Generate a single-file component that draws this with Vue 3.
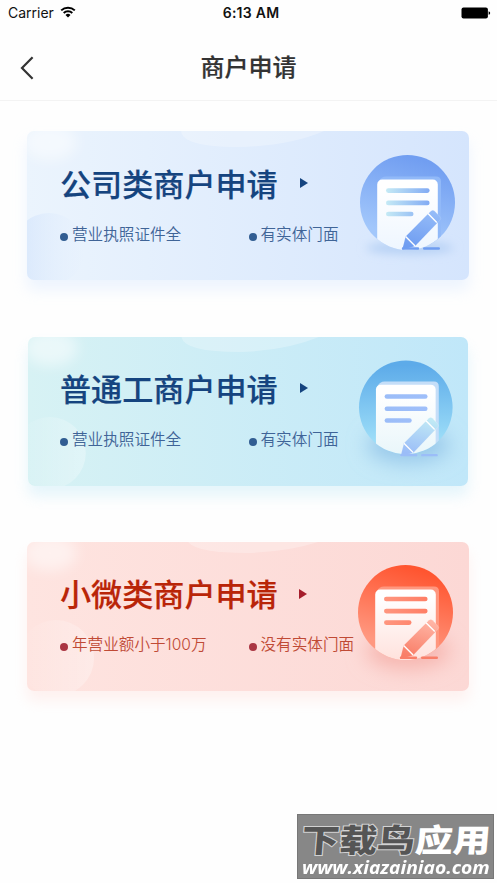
<template>
  <div class="page">
    <div class="status-bar">
      <div class="carrier">
        <span>Carrier</span>
        <svg class="wifi" viewBox="0 0 16 12">
          <path d="M1.2 4.4a9.8 9.8 0 0 1 13.6 0" />
          <path d="M3.7 7a6.2 6.2 0 0 1 8.6 0" />
          <path class="wifi-dot" d="M8 11.4 5.5 8.9a3.6 3.6 0 0 1 5 0z" />
        </svg>
      </div>
      <span class="time">6:13 AM</span>
      <svg class="battery" viewBox="0 0 30 12">
        <rect x="0.5" y="0.5" width="26.4" height="11" rx="2" />
        <path d="M27.6 4.2q1.6.4 1.6 1.8t-1.6 1.8z" />
      </svg>
    </div>

    <header class="nav-bar">
      <svg class="back" viewBox="0 0 14 24">
        <path d="M12.6 1.2 2 12l10.6 10.8" />
      </svg>
      <h1>商户申请</h1>
    </header>

    <main class="card-list">
      <section
        v-for="card in cards"
        :key="card.id"
        class="card"
        :class="card.id"
      >
        <svg class="card-decor" viewBox="0 0 442 149" preserveAspectRatio="none">
          <defs>
            <linearGradient :id="card.id + '-bubble'">
              <stop offset="0" class="bubble-from" />
              <stop offset="1" class="bubble-to" />
            </linearGradient>
            <filter :id="card.id + '-glow'" x="-50%" y="-50%" width="200%" height="200%">
              <feGaussianBlur stdDeviation="7" />
            </filter>
          </defs>
          <ellipse cx="23" cy="11" rx="27" ry="18" class="glow" :filter="url(card.id, 'glow')" />
          <path :d="card.arc" class="arc" />
          <circle
            :cx="card.bubble.x"
            :cy="card.bubble.y"
            :r="card.bubble.r"
            :fill="url(card.id, 'bubble')"
          />
        </svg>

        <div class="card-text">
          <div class="card-title">
            <h2>{{ card.title }}</h2>
            <svg class="arrow" viewBox="0 0 8 10"><path d="M0 0 8 5 0 10z" /></svg>
          </div>
          <ul class="features">
            <li v-for="item in card.features" :key="item">{{ item }}</li>
          </ul>
        </div>

        <svg class="card-icon" viewBox="0 0 95 95">
          <defs>
            <linearGradient :id="card.id + '-disc'" :x1="card.discX" y1="0" :x2="1 - card.discX" y2="1">
              <stop offset="0.05" :stop-color="card.disc[0]" />
              <stop offset="0.85" :stop-color="card.disc[1]" />
            </linearGradient>
            <linearGradient :id="card.id + '-paper'" x1="0" y1="0" x2="0" y2="1">
              <stop offset="0.1" stop-color="#fff" />
              <stop offset="0.9" :stop-color="card.paper" />
            </linearGradient>
            <linearGradient
              :id="card.id + '-line'"
              gradientUnits="userSpaceOnUse"
              x1="26"
              y1="0"
              x2="70"
              y2="0"
            >
              <stop offset="0" :stop-color="card.line[0]" />
              <stop offset="1" :stop-color="card.line[1]" />
            </linearGradient>
            <linearGradient
              :id="card.id + '-pen'"
              gradientUnits="userSpaceOnUse"
              x1="70"
              y1="57"
              x2="60"
              y2="94"
            >
              <stop offset="0" :stop-color="card.pen[0]" />
              <stop offset="1" :stop-color="card.pen[1]" />
            </linearGradient>
            <clipPath :id="card.id + '-clip'">
              <path d="M0 0H95V47.5A47.5 47.5 0 0 1 0 47.5z" />
            </clipPath>
            <filter :id="card.id + '-blur'" x="-50%" y="-150%" width="200%" height="400%">
              <feGaussianBlur :stdDeviation="card.shade.blur" />
            </filter>
          </defs>
          <ellipse
            cx="50"
            :cy="card.shade.y"
            :rx="card.shade.rx"
            :ry="card.shade.ry"
            :fill="card.shade.color"
            :filter="url(card.id, 'blur')"
          />
          <circle cx="47.5" cy="47.5" r="47.5" :fill="url(card.id, 'disc')" />
          <g :clip-path="url(card.id, 'clip')">
            <path d="M19 26q2-4.6 7-4.6h50q5 0 5 5V100H70V26z" :fill="card.sheet" />
            <rect x="17.2" y="24.5" width="60.6" height="80" rx="5" :fill="url(card.id, 'paper')" />
          </g>
          <g :fill="url(card.id, 'line')">
            <rect x="26" :y="card.lines[0]" width="43.6" height="4.6" rx="2.3" />
            <rect x="26" :y="card.lines[1]" width="43.6" height="4.6" rx="2.3" />
            <rect x="26" :y="card.lines[2]" width="27.5" height="4.6" rx="2.3" />
          </g>
          <g :transform="`translate(0 ${card.penY})`">
            <path
              d="M42.2 94.8 45.6 81.4 68.6 58.2 71 56q1.9-1.6 3.6.1l5.3 5.5q1.7 1.8 0 3.6L55 91.3z"
              class="pen-edge"
              :fill="url(card.id, 'pen')"
            />
            <path d="m68 58.6 8.8 8.8M45.6 81.4l9.5 9.5" class="pen-gap" />
            <path d="M43 93.5h15M64.2 93.5h14.6" class="underline" :stroke="card.pen[1]" />
          </g>
        </svg>
      </section>
    </main>

    <div class="watermark">
      <div class="mark-name"><span>下载鸟</span><b>应用</b></div>
      <div class="mark-url">www.xiazainiao.com</div>
    </div>
  </div>
</template>

<script setup>
const cards = [
  {
    id: 'company',
    title: '公司类商户申请',
    features: ['营业执照证件全', '有实体门面'],
    arc: 'M154 0Q155 16 212 16Q262 15 297 0z',
    bubble: { x: 22, y: 118, r: 36 },
    disc: ['#719ef1', '#a2c7fb'],
    discX: 0.65,
    paper: '#eef6ff',
    sheet: '#91b9f8',
    line: ['#c5eaf5', '#81aaf4'],
    pen: ['#94bbf8', '#6f9df1'],
    lines: [33.3, 45.6, 56.7],
    penY: 0,
    shade: { y: 93, rx: 44, ry: 6, blur: 5, color: '#b5d0f4' },
  },
  {
    id: 'business',
    title: '普通工商户申请',
    features: ['营业执照证件全', '有实体门面'],
    arc: 'M154 0Q157 15 212 15Q258 14 292 0z',
    bubble: { x: 22, y: 116, r: 36 },
    disc: ['#5dabe9', '#9cddf8'],
    discX: 0.5,
    paper: '#e9f6fa',
    sheet: '#c5def8',
    line: ['#9bbdf8', '#9fbffa'],
    pen: ['#c0e9f5', '#9bbdf8'],
    lines: [34.3, 46.7, 58.5],
    penY: 2.6,
    shade: { y: 86, rx: 42, ry: 18, blur: 10, color: '#98c8ea' },
  },
  {
    id: 'micro',
    title: '小微类商户申请',
    features: ['年营业额小于100万', '没有实体门面'],
    arc: 'M161 0Q170 11 220 11Q260 10 291 0z',
    bubble: { x: 29, y: 116, r: 38 },
    disc: ['#ff5530', '#ff9880'],
    discX: 0.65,
    paper: '#ffe1dc',
    sheet: '#ff977f',
    line: ['#ff967f', '#ff7e65'],
    pen: ['#ffb4a4', '#f97e68'],
    lines: [31.7, 43.8, 55.3],
    penY: -0.8,
    shade: { y: 86, rx: 42, ry: 18, blur: 10, color: '#f6b5af' },
  },
]

const url = (id, part) => `url(#${id}-${part})`
</script>

<style>
body {
  background: #fefefe;
}
</style>

<style scoped>
.page {
  position: relative;
  box-sizing: border-box;
  width: 497px;
  height: 883px;
  overflow: hidden;
  background: #fefefe;
  font-family: Inter, 'Noto Sans CJK SC', sans-serif;
}

.status-bar {
  display: grid;
  grid-template-columns: 1fr auto 1fr;
  align-items: center;
  height: 25px;
  padding: 0 6px 0 8px;
  font-size: 14px;
  color: #111;
}

.carrier {
  display: flex;
  align-items: center;
  gap: 6px;
}

.wifi {
  width: 16px;
  height: 12px;
  margin-top: -2px;
  fill: none;
  stroke: #000;
  stroke-width: 2;
}

.wifi-dot {
  fill: #000;
  stroke: none;
}

.time {
  padding-left: 3px;
  font-weight: 600;
  letter-spacing: 0.25px;
}

.battery {
  justify-self: end;
  width: 30px;
  height: 12px;
}

.nav-bar {
  display: grid;
  grid-template-columns: 40px 1fr 40px;
  align-items: center;
  box-sizing: border-box;
  height: 76px;
  padding-top: 8px;
  border-bottom: 1px solid #f3f3f3;
}

.back {
  width: 14px;
  height: 24px;
  margin: 3px 0 0 19.5px;
  fill: none;
  stroke: #333;
  stroke-width: 2.2;
}

h1 {
  margin: 2px 0 0;
  text-align: center;
  font-size: 24px;
  line-height: 36px;
  font-weight: 500;
  color: #333;
  -webkit-text-stroke: 0.2px #333;
}

.card-list {
  display: flex;
  flex-direction: column;
  gap: 56.4px;
  padding: 30.2px 27.6px 0 27px;
}

.card {
  position: relative;
  display: flex;
  justify-content: space-between;
  box-sizing: border-box;
  height: 149px;
  padding: 23.4px 14.6px 0 33px;
  border-radius: 7px;
}

.company {
  --title: #15447f;
  --text: #3f6497;
  --dot: #315d92;
  background: linear-gradient(90deg, #ebf4fd, #d5e5fd);
  box-shadow: 0 10px 14px rgba(213, 230, 255, 0.4);
}

.business {
  --title: #15447f;
  --text: #3f6497;
  --dot: #315d92;
  margin: 0 1px;
  padding-left: 32px;
  padding-right: 15.7px;
  background: linear-gradient(90deg, #d7f2f4, #c0e7f9);
  box-shadow: 0 10px 14px rgba(200, 236, 249, 0.45);
}

.micro {
  --title: #b92508;
  --text: #c04a35;
  --dot: #aa3542;
  padding-right: 16.4px;
  background: linear-gradient(90deg, #fee4e0, #fcd8d5);
  box-shadow: 0 10px 14px rgba(254, 222, 218, 0.4);
}

.card-decor {
  position: absolute;
  inset: 0;
  width: 100%;
  height: 100%;
  border-radius: 7px;
  overflow: hidden;
}

.glow {
  fill: #fff;
  opacity: 0.5;
}

.arc {
  fill: #fff;
  opacity: 0.26;
}

.bubble-from {
  stop-color: #fff;
  stop-opacity: 0;
}

.bubble-to {
  stop-color: #fff;
  stop-opacity: 0.3;
}

.company .bubble-from {
  stop-color: #d0e2fb;
  stop-opacity: 0.8;
}

.company .bubble-to {
  stop-color: #e8f2fe;
  stop-opacity: 0.2;
}

.card-text {
  position: relative;
  width: 300px;
  white-space: nowrap;
}

.card-title {
  display: flex;
  align-items: center;
  gap: 22.5px;
  height: 60px;
}

h2 {
  margin: 0;
  font-size: 31.1px;
  line-height: 46px;
  font-weight: 500;
  color: var(--title);
  -webkit-text-stroke: 0.2px var(--title);
}

.arrow {
  width: 8px;
  height: 10px;
  margin-top: -3px;
  fill: var(--title);
}

.micro .arrow {
  margin-left: -1px;
  fill: #a51d2b;
}

.features {
  display: grid;
  grid-template-columns: 188.5px auto;
  margin: 8px 0 0;
  padding: 0;
  list-style: none;
}

.features li {
  display: flex;
  align-items: center;
  gap: 4px;
  font-size: 15.6px;
  line-height: 24px;
  font-weight: 350;
  color: var(--text);
}

.features li::before {
  content: '';
  width: 8px;
  height: 8px;
  margin-top: 4px;
  border-radius: 50%;
  background: var(--dot);
}

.card-icon {
  position: relative;
  flex-shrink: 0;
  width: 95px;
  height: 95px;
  overflow: visible;
}

.business .card-icon {
  width: 93.6px;
  height: 94.6px;
}

.pen-edge {
  stroke: rgba(255, 255, 255, 0.25);
  stroke-width: 0.5;
}

.pen-gap {
  fill: none;
  stroke: #fff;
  stroke-width: 1.4;
}

.underline {
  stroke-width: 2.4;
  stroke-linecap: round;
}

/* site stamp in the bottom right corner */
.watermark {
  position: absolute;
  right: 3px;
  bottom: 4px;
  box-sizing: border-box;
  width: 197px;
  height: 65px;
  padding: 6px 4px 0;
  border: 1px solid #777;
  background: #878787;
  color: #fff;
  white-space: nowrap;
}

.mark-name {
  display: flex;
  width: max-content;
  font-family: 'Noto Sans CJK SC', sans-serif;
  font-size: 32px;
  line-height: 34px;
  font-weight: 900;
  transform: scaleX(1.18) skewX(-4deg);
  transform-origin: left center;
}

.mark-name span {
  color: #555;
  -webkit-text-stroke: 2px #d2d2d2;
  paint-order: stroke fill;
}

.mark-url {
  width: max-content;
  font-family: 'Open Sans', sans-serif;
  font-size: 18.5px;
  line-height: 24px;
  font-weight: 700;
  font-style: italic;
  transform: scaleX(1.04);
  transform-origin: left center;
}
</style>
